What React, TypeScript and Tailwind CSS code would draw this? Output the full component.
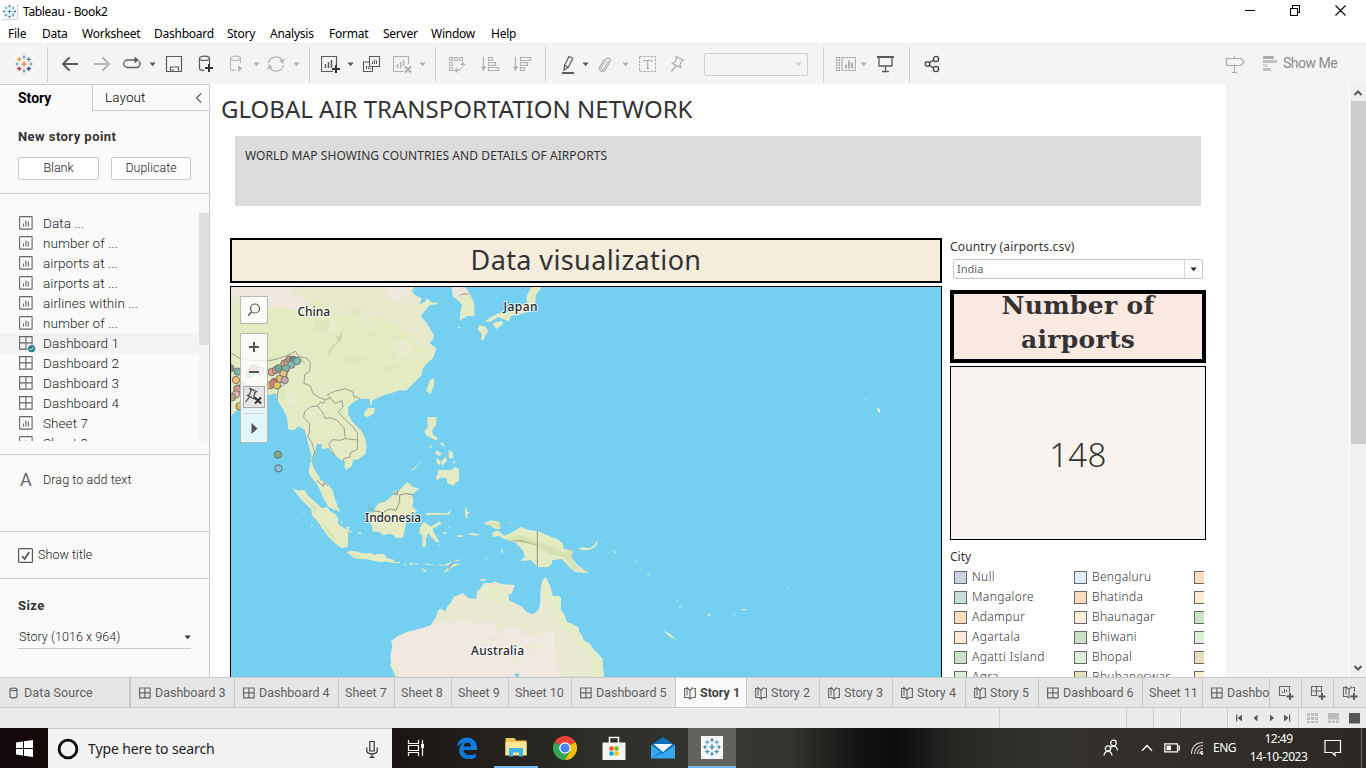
import React from "react";

const Svg = ({ w = 20, h = 20, className = "", children }: { w?: number; h?: number; className?: string; children: React.ReactNode }) => (
  <svg width={w} height={h} viewBox={`0 0 ${w} ${h}`} fill="none" className={`block shrink-0 ${className}`}>
    {children}
  </svg>
);

const Caret = ({ className = "" }: { className?: string }) => (
  <Svg w={7} h={5} className={className}>
    <path d="M.5.6h6.200L3.600 4.300z" fill="currentColor" />
  </Svg>
);

const Sep = ({ className = "" }: { className?: string }) => <div className={`h-[35px] w-px shrink-0 bg-[#cfcfcf] ${className}`} />;

const crosses: [number, number, number, number][] = [
  [10, 10, 2.8, 0],
  [10, 3, 1.7, 1],
  [10, 17, 1.7, 1],
  [3, 10, 1.7, 2],
  [17, 10, 1.7, 2],
  [5.3, 5.3, 2.2, 3],
  [14.7, 5.3, 2.2, 4],
  [5.3, 14.7, 2.2, 5],
  [14.7, 14.7, 2.2, 6],
];

const Logo = ({ colors, className = "", size = 20 }: { colors: string[]; className?: string; size?: number }) => (
  <svg width={size} height={size} viewBox="0 0 20 20" className={`block shrink-0 ${className}`}>
    {crosses.map(([x, y, r, c]) => (
      <path key={`${x}-${y}`} d={`M${x - r} ${y}H${x + r}M${x} ${y - r}V${y + r}`} stroke={colors[c]} strokeWidth="1.2" />
    ))}
  </svg>
);

const logoColors = ["#e8762d", "#7199a6", "#7199a6", "#eb912c", "#5b879b", "#c72035", "#1f457e"];
const logoBlue = ["#2f79ad", "#2f79ad", "#2f79ad", "#6aa5c9", "#6aa5c9", "#4a8fbd", "#4a8fbd"];

const menus: [string, string][] = [
  ["File", "w-[34px]"],
  ["Data", "w-[40px]"],
  ["Worksheet", "w-[72px]"],
  ["Dashboard", "w-[73px]"],
  ["Story", "w-[43px]"],
  ["Analysis", "w-[59px]"],
  ["Format", "w-[54px]"],
  ["Server", "w-[48px]"],
  ["Window", "w-[60px]"],
  ["Help", "w-[40px]"],
];

const TitleBar = () => (
  <header className="font-['Noto_Sans',sans-serif] text-xs text-black">
    <div className="flex h-6 items-center pl-[2px]">
      <Logo size={16} colors={logoBlue} className="border-r border-b border-gray-300" />
      <span className="ml-[5px] tracking-[-0.33px]">Tableau - Book2</span>
      <Svg w={110} h={16} className="mr-3 mb-1 ml-auto">
        <path d="M1 8.500h10M46.500 6.500h7v7h-7zM48.500 6.500v-3h7v7h-2M91.500 3.500l10 10M101.500 3.500l-10 10" stroke="#000" strokeWidth="1.1" />
      </Svg>
    </div>
    <nav className="flex h-[19px] items-center pl-2">
      {menus.map(([label, w]) => (
        <span key={label} className={`${w} shrink-0 tracking-[-0.25px] whitespace-nowrap`}>
          {label}
        </span>
      ))}
    </nav>
  </header>
);

const Toolbar = () => (
  <div className="flex h-[41px] items-center border-t border-[#ededed] bg-[#f4f4f4] text-[#5b5b5b]">
    <Logo colors={logoColors} className="ml-[14px]" />
    <Sep className="ml-[13px]" />
    <Svg className="ml-3"><path d="M18 10H3M9.500 3.500L3 10l6.500 6.500" stroke="currentColor" strokeWidth="2" /></Svg>
    <Svg className="ml-3 text-[#b4b4b4]"><path d="M2 10h15M10.500 3.500L17 10l-6.500 6.500" stroke="currentColor" strokeWidth="2" /></Svg>
    <Svg className="ml-[10px]">
      <path d="M9 6H5.500a3.700 3.700 0 0 0 0 7.500h9a3.700 3.700 0 0 0 2.500-6.300M8 6h7" stroke="currentColor" strokeWidth="1.3" />
      <path d="M12.500 2.700L17 6l-4.500 3.300z" fill="currentColor" />
    </Svg>
    <Caret className="ml-[7px]" />
    <Svg className="ml-2"><path d="M2.500 2.500h15v15h-15zM6.500 17v-4h8v4M9 17v-2" stroke="currentColor" strokeWidth="1.2" /></Svg>
    <Svg className="ml-3">
      <path d="M3.500 4.500v10c0 1.300 2 2 5 2M13.500 4.500V10" stroke="currentColor" strokeWidth="1.2" />
      <ellipse cx="8.500" cy="4.300" rx="5" ry="2.200" stroke="currentColor" strokeWidth="1.2" />
      <path d="M13 10v8M9 14h8" stroke="#333" strokeWidth="2" />
    </Svg>
    <Svg className="ml-[11px] text-[#b8b8b8]">
      <path d="M3.500 4.500v10c0 1.300 2 2 5 2M13.500 4.500V9" stroke="currentColor" strokeWidth="1.2" />
      <ellipse cx="8.500" cy="4.300" rx="5" ry="2.200" stroke="currentColor" strokeWidth="1.2" />
      <path d="M11 11l4.500 3.500-4.500 3.500z" fill="currentColor" />
    </Svg>
    <Caret className="ml-[6px] text-[#b0b0b0]" />
    <Svg className="ml-[6px] text-[#b4b4b4]">
      <path d="M2.500 9a7.500 7 0 0 1 14-2.500M17.500 11a7.500 7 0 0 1-14 2.500" stroke="currentColor" strokeWidth="1.3" />
      <path d="M18.800 5l-2 5-3.600-3.800zM1.200 15l2-5 3.600 3.800z" fill="currentColor" />
    </Svg>
    <Caret className="ml-[7px] text-[#b0b0b0]" />
    <Sep className="ml-[9px]" />
    <Svg className="ml-[11px]">
      <path d="M12 17.500H.5v-15h15V12" stroke="currentColor" strokeWidth="1.2" />
      <path d="M4.500 14V10M7.500 14V8M10.500 14V6" stroke="currentColor" strokeWidth="1.5" />
      <path d="M15 11v8M11 15h8" stroke="#333" strokeWidth="2" />
    </Svg>
    <Caret className="ml-[6px]" />
    <Svg className="ml-2">
      <path d="M7.500 2.500h10v10h-10zM7.500 8h-6v9.500h9V13M10.500 10V7.500M12.500 10V5.500M14.500 10V6.500M4.500 15v-3M6.500 15v-2M8.500 15v-1" stroke="currentColor" strokeWidth="1.1" />
    </Svg>
    <Svg className="ml-[11px] text-[#b0b0b0]">
      <path d="M11 17.500H.5v-15h15V10" stroke="currentColor" strokeWidth="1.2" />
      <path d="M4.500 14V10M7.500 14V8M10.500 12V6" stroke="currentColor" strokeWidth="1.500" />
      <path d="M12 12.500l6 6M18 12.500l-6 6" stroke="currentColor" strokeWidth="2" />
    </Svg>
    <Caret className="ml-[6px] text-[#b0b0b0]" />
    <Sep className="ml-[9px]" />
    <Svg className="ml-[11px] text-[#b4b4b4]">
      <path d="M2.500 3.500h3v3h-3zM7.500 3.500h3v3h-3zM12.500 3.500h3v3h-3zM2.500 8.500h3v3h-3zM2.500 13.500h3v3h-3z" stroke="currentColor" strokeWidth="1.1" />
      <path d="M16 10c0 4-3 6.500-7 6.500" stroke="currentColor" strokeWidth="1.2" />
      <path d="M13 11l3-3.500 2.500 3.500zM10.500 13.500L7 16.500l3.500 2.500z" fill="currentColor" />
    </Svg>
    <Svg className="ml-[13px] text-[#b0b0b0]">
      <path d="M3.500 3v11M8.500 3.500h4v3h-4zM8.500 8.500h7v3h-7zM8.500 13.500h10v3h-10z" stroke="currentColor" strokeWidth="1.200" />
      <path d="M.8 12.500h5.400L3.500 17z" fill="currentColor" />
    </Svg>
    <Svg className="ml-3 text-[#b0b0b0]">
      <path d="M3.500 3v11M8.500 3.500h10v3h-10zM8.500 8.500h7v3h-7zM8.500 13.500h4v3h-4z" stroke="currentColor" strokeWidth="1.200" />
      <path d="M.8 12.500h5.400L3.500 17z" fill="currentColor" />
    </Svg>
    <Sep className="ml-[13px]" />
    <Svg className="ml-3">
      <path d="M6.500 11.500l4.500-9 3.800 1.800-4.500 9zM6.500 11.500L6 16l4.300-2.700" stroke="currentColor" strokeWidth="1.2" />
      <path d="M4 19h12" stroke="currentColor" strokeWidth="2" />
    </Svg>
    <Caret className="ml-1" />
    <Svg className="ml-[6px] text-[#adadad]">
      <path d="M13.500 7l-4.800 8.300c-1 1.700-3.500.3-2.600-1.500l5-8.600c1.600-2.400 5.200-.4 4 2.200l-5 8.700c-1.700 3.200-7.200.600-5.400-3l4.300-7.600" stroke="currentColor" strokeWidth="1.1" />
    </Svg>
    <Caret className="ml-[7px] text-[#b0b0b0]" />
    <Svg className="ml-[9px] text-[#adadad]">
      <rect x="1.500" y="2.500" width="16" height="15" stroke="currentColor" strokeWidth="1.1" strokeDasharray="2.500 1.200" />
      <path d="M6 8V6.500h7.500V8M9.700 6.500v8M8 14.500h3.500" stroke="currentColor" strokeWidth="1.1" />
    </Svg>
    <Svg className="ml-[9px] text-[#adadad]">
      <path d="M9 2.500l7.500 3.500-2 1-1.500 4 .8 2.500-8.500-4 2.500-1.200L9.500 5zM9 12l-4.500 5.500" stroke="currentColor" strokeWidth="1.2" />
    </Svg>
    <div className="ml-[17px] flex h-[23px] w-[104px] shrink-0 items-center justify-end rounded-xs border border-[#d0d0d0] pr-[5px] text-[#cfcfcf]">
      <Caret />
    </div>
    <Sep className="ml-[15px]" />
    <Svg className="ml-3 text-[#b0b0b0]">
      <path d="M.5 3.500h3v3h-3zM.5 8.500h3v3h-3zM.5 13.500h3v3h-3zM6 3.500h13.500v13H6z" stroke="currentColor" strokeWidth="1.2" />
      <path d="M10 14.500v-4M13 14.500V6.500M16 14.500v-6" stroke="currentColor" strokeWidth="2" />
    </Svg>
    <Caret className="ml-1 text-[#b0b0b0]" />
    <Svg className="ml-[9px]">
      <path d="M1 3h17" stroke="currentColor" strokeWidth="2" />
      <path d="M3 3.500v8.500h13V3.500M9.500 12v5.500M6 17.500h7" stroke="currentColor" strokeWidth="1.3" />
    </Svg>
    <Sep className="ml-[13px]" />
    <Svg className="ml-3 text-[#444]">
      <path d="M7 9l4.500-3M7 11l4.500 3" stroke="currentColor" strokeWidth="1.300" />
      <circle cx="5.500" cy="10" r="2.300" stroke="currentColor" strokeWidth="1.300" />
      <circle cx="14" cy="5" r="2.600" stroke="currentColor" strokeWidth="1.300" />
      <circle cx="14" cy="15" r="2.600" stroke="currentColor" strokeWidth="1.300" />
    </Svg>
    <Svg className="ml-auto text-[#ababab]">
      <path d="M1.500 4.500h14.500l3 3.500-3 3.500H1.500zM9.500 2v2.500M9.500 11.500v7M7 18.500h5" stroke="currentColor" strokeWidth="1.200" />
    </Svg>
    <Svg className="ml-[17px]" w={18}>
      <path d="M1 2h11v3H1z" fill="#adadad" />
      <path d="M1 6h14v3H1zM1 14h8v3H1z" fill="#c0c0c0" />
      <path d="M1 10h5v3H1z" fill="#d5d5d5" />
    </Svg>
    <span className="mr-[28px] ml-[3px] w-[55px] pb-px font-['Roboto',sans-serif] text-[14px] tracking-[-0.5px] whitespace-nowrap text-[#8a8a8a]">Show Me</span>
  </div>
);

const SheetIcon = () => (
  <Svg w={14} h={14}>
    <rect x=".6" y=".6" width="12.500" height="12.500" rx=".6" stroke="#666" strokeWidth="1.1" />
    <path d="M4.500 10.500v-3M6.900 10.500v-6M9.300 10.500V5.500" stroke="#666" strokeWidth="1.1" />
  </Svg>
);

const GridIcon = ({ checked = false }: { checked?: boolean }) => (
  <svg width="17" height="14" viewBox="0 0 17 14" fill="none" className="block shrink-0 overflow-visible">
    <path d="M.6.6h12.500v12.500H.6zM6.900.6v12.500M.6 6.900h12.500" stroke="#666" strokeWidth="1.1" />
    {checked && (
      <>
        <circle cx="12.600" cy="12.700" r="4.200" fill="#fafafa" />
        <circle cx="12.600" cy="12.700" r="3.600" fill="#35809f" />
        <path d="M11 12.700l1.200 1.300 2.200-2.500" stroke="#fff" strokeWidth=".9" />
      </>
    )}
  </svg>
);

const StoryIcon = () => (
  <Svg w={12} h={14}>
    <path d="M2.500 2.500H.6v9h3.600L6 13l1.800-1.500h3.600v-9H9.500M6 13V4.500M6 4.500L3 1.500v8M6 4.500l3-3" stroke="#666" strokeWidth="1.100" />
  </Svg>
);

const points = ["Data ...", "number of ...", "airports at ...", "airports at ...", "airlines within ...", "number of ...", "Dashboard 1", "Dashboard 2", "Dashboard 3", "Dashboard 4", "Sheet 7", "Sheet 8"];

const Sidebar = () => (
  <aside className="flex w-[210px] shrink-0 flex-col border-t border-r border-[#c9c9c9] bg-[#fafafa] font-['Roboto',sans-serif] text-[13px] text-[#333]">
    <div className="flex h-[26px] shrink-0">
      <div className="flex w-[92px] items-center pl-[18px] text-sm font-bold text-black">Story</div>
      <div className="flex flex-1 items-center justify-between border-b border-l border-[#c9c9c9] pl-3 text-[13.500px] font-light tracking-[0.1px] text-black">
        Layout
        <Svg w={8} h={12} className="mr-[6px]"><path d="M6 1.500L1.500 6 6 10.500" stroke="#666" strokeWidth="1.300" /></Svg>
      </div>
    </div>
    <div className="h-[83px] shrink-0 border-b border-[#c9c9c9] px-[18px] pt-4">
      <h2 className="text-[13px] leading-5 font-bold tracking-[0.45px] text-[#333]">New story point</h2>
      <div className="mt-[10px] flex gap-3">
        <button className="h-[23px] w-[81px] rounded-xs border border-[#c9c9c9] bg-white text-[12.500px] font-light text-[#222]">Blank</button>
        <button className="h-[23px] w-[80px] rounded-xs border border-[#c9c9c9] bg-white text-[12.500px] font-light text-[#222]">Duplicate</button>
      </div>
    </div>
    <div className="h-[261px] shrink-0 border-b border-[#c9c9c9] pt-[19px]">
      <div className="flex h-[228px] overflow-hidden">
        <ul className="min-w-0 flex-1">
          {points.map((p, i) => (
            <li key={i} className={`flex h-5 items-center pl-[19px] text-[13.500px] ${i === 6 ? "bg-[#f3f3f3]" : ""}`}>
              <span className="w-6">{p.startsWith("Dash") ? <GridIcon checked={i === 6} /> : <SheetIcon />}</span>
              <span className="font-light tracking-[0.07px] text-[#222]">{p}</span>
            </li>
          ))}
        </ul>
        <div className="w-[10px] bg-[#f4f4f4]">
          <div className="h-[132px] bg-[#dfdfdf]" />
        </div>
      </div>
    </div>
    <div className="flex h-[77px] shrink-0 border-b border-[#c9c9c9] pt-[15px] pl-[20px]">
      <span className="w-[23px] text-[18px] leading-5 text-[#666]">A</span>
      <span className="text-[12.500px] leading-5 font-light tracking-[0.1px] text-[#222]">Drag to add text</span>
    </div>
    <div className="flex h-[47px] shrink-0 items-center border-b border-[#c9c9c9] pl-[18px]">
      <Svg w={15} h={15}>
        <rect x=".6" y=".6" width="13.800" height="13.800" rx="1" stroke="#555" strokeWidth="1.200" fill="#fff" />
        <path d="M4 8l2.700 3 4.500-7" stroke="#555" strokeWidth="1.800" />
      </Svg>
      <span className="ml-[5px] text-[12.500px] font-light tracking-[0.05px] text-[#222]">Show title</span>
    </div>
    <div className="px-[18px] pt-[17px]">
      <h2 className="text-[13px] leading-5 font-bold tracking-[0.4px] text-[#333]">Size</h2>
      <div className="mt-[10px] flex h-[23px] w-[173px] items-center justify-between border-b border-[#c9c9c9] pl-px">
        <span className="text-[12.500px] font-light tracking-[0.05px] text-[#222]">Story (1016 x 964)</span>
        <Caret />
      </div>
    </div>
  </aside>
);

const airports: [number, number, string][] = [
  [38, 275, "#5aa79d"], [33, 300, "#f0b455"], [37, 326, "#d3828c"], [33, 343, "#e8aaa5"], [21, 352, "#a89868"], [44, 379, "#d7b24f"], [16, 265, "#777"],
  [75, 280, "#a0cbe8"], [86, 266, "#d37295"], [106, 272, "#d4a6c8"], [54, 318, "#e9a0a0"], [72, 326, "#e9a0a0"],
  [140, 276, "#e88b78"], [153, 270, "#e88b78"], [160, 265, "#4f9b8f"], [178, 251, "#ce8d72"], [188, 246, "#f0a77b"], [193, 239, "#cf7173"],
  [205, 240, "#477a91"], [216, 243, "#6bb6ad"], [199, 254, "#6fb2b4"], [183, 265, "#6dada5"], [175, 281, "#eeb47a"], [164, 297, "#efbb5b"],
  [179, 300, "#c99bac"], [148, 306, "#e15759"], [135, 316, "#ed9661"], [146, 311, "#e86955"], [156, 316, "#efb83f"], [159, 524, "#86a65f"], [160, 565, "#93bcd2"],
];

const WorldMap = () => (
  <svg viewBox="231 287 710 390" className="block h-full w-full">
    <rect x="231" y="287" width="710" height="390" fill="#74cff1" />
    <g transform="translate(225 280) scale(.33333)" fill="#e4ebc3">
      <path d="M18 20H568L560 36L575 50L590 53L583 73L600 65L606 55L622 68L638 67L636 73L614 75L600 92L587 108L606 130L612 148L626 165L625 178L612 189L613 199L634 205L626 231L604 252L593 267L590 286L566 310L543 332L524 331L500 339L473 347L450 358L441 362L441 374L436 374L433 356L403 356L381 370L370 381L369 402L381 424L407 449L421 474L425 500L421 522L402 537L384 541L381 557L364 569L358 562L360 545L342 536L323 519L310 503L291 508L290 492L275 493L269 525L260 548L271 573L284 592L286 600L306 610L323 630L330 658L343 689L328 690L310 680L295 655L285 630L275 611L252 583V565L260 528L249 488L239 450L221 439L207 451L190 448L185 409L172 384L159 364L149 340L121 349L72 362L50 372L40 387L18 407Z" />
      <path d="M18 20H558L565 42L590 55L584 73L600 78L585 108L606 130L626 165L615 190L634 205L620 240L606 205L574 189L553 160L530 150L504 126L453 110L410 100L374 115L342 102L300 71L260 60L250 92L220 94L189 80L160 86L132 68L18 75Z" fill="#e8e8cd" />
      <path d="M18 20H208L190 38L230 52L251 72L235 94L210 86L187 88L164 76L120 80L87 44L18 46ZM480 20H555L560 52L535 48L518 65L490 55Z" fill="#efe8df" />
      <path d="M395 95L432 94L440 122L412 125ZM500 185L550 180L562 215L520 238ZM300 130L330 120L338 154L318 161ZM188 350L215 332L218 367L194 380Z" fill="#ebe9d3" opacity=".7" />
      <path d="M265 110L320 130L300 158L266 147ZM370 95L395 86L412 96L390 110ZM420 160L458 154L440 171ZM345 225L430 235L380 252ZM470 260L535 252L480 278ZM162 302L185 337L176 366L155 327ZM130 236L175 219L140 250ZM310 245L344 272L375 279L330 273Z" fill="#d9e3b6" opacity=".55" />
      <path d="M352 150L345 165L332 174L340 181L322 197L313 210L310 232L322 205L337 190L350 178ZM195 225L230 232L246 258L236 250L212 235Z" fill="#c4cda0" opacity=".75" />
      <path d="M680 20H720L735 42L748 70L748 109L727 108L704 122L707 90L711 76L698 59L685 51ZM920 20H951L933 45L931 68L915 94L882 104L858 108L851 124L820 111L797 125L779 125L797 111L823 99L857 96L878 82L907 69L904 50ZM803 130L829 122L835 131L813 148ZM764 136L781 139L790 154L780 169L776 181L768 180L770 162L757 148ZM615 299L628 294L627 315L617 342L604 333ZM418 397L430 383L451 385L446 401L429 411L417 407ZM607 411L635 411L633 435L621 449L624 464L638 474L637 482L620 475L603 466L598 453L608 443ZM612 495L620 498L618 508ZM632 510L649 520L643 528L632 522ZM642 486L655 490L661 503L648 493ZM671 510L683 516L686 535L672 535ZM634 533L646 542L645 556L636 552ZM647 546L661 531L667 540L652 558ZM557 573L592 541L568 568ZM633 590L650 578L667 582L690 560L702 568V602L690 610L684 617L668 608L666 595L648 592L638 600ZM699 141h6v3h-6zM684 540l7 7-5 6z" />
      <path d="M680 20H720L734 41L704 47L698 57L684 50Z" fill="#eee6dd" />
      <g fill="none" stroke="#979b8c" strokeWidth="2.800">
        <path d="M18 219L43 235L64 240L126 243L157 237L182 228L200 220L213 214L219 229L245 234L257 250L253 275L239 283L237 310L256 317L264 341L282 352L301 359L317 354L307 344L329 334L361 326L384 336L386 349L405 356M301 359L296 370L285 367L278 378L257 380L239 394L236 412L254 432L253 458L248 471L260 487L269 515L260 545M278 378L292 396L300 415L317 413L336 421L357 443L361 476L345 481L322 479L312 493L322 515L331 529M317 354L330 371L351 362L354 380L339 397L365 423L385 442L397 459L398 480L361 476M398 480L397 508L376 518L375 531L357 535L355 544M206 247L190 267L179 313L160 326L156 360M704 48L710 43L732 41M150 340L158 350" />
      </g>
      <g stroke="#555f5c" strokeWidth="3" opacity=".82">
        {airports.map(([x, y, c], i) => <circle key={i} cx={x} cy={y} r="11" fill={c} />)}
      </g>
    </g>
    <g transform="translate(225 470) scale(.33333)" fill="#e4ebc3">
      <path d="M203 55L218 61L239 61L248 76L274 99L290 115L308 112L316 124L329 131L340 145L339 161L351 170L366 179L369 188V222L367 231L350 235L328 218L308 198L292 176L277 153L262 138L258 117L237 97L217 75ZM365 247L377 242L398 245L411 250L441 250L447 256L458 251L477 252L486 265L507 269V279L487 275L463 276L427 268L390 266ZM429 130L444 127L452 112L461 99L480 95L504 75L521 64L546 35L563 50L584 57L570 66L562 78L566 93L562 110L577 124L560 134L546 150L540 174L535 203L514 204L505 196L493 191L475 196L462 186L443 184L440 165L428 152ZM602 130L626 128L666 130L681 119L672 134L646 134L604 136ZM584 173L593 160L600 156L617 170L643 154L650 160L622 178L637 206L645 216L634 216L619 202L609 188L603 208V230L592 230V195L584 193ZM720 114L724 112L726 125L736 125L727 134L727 149L721 137ZM641 0L702 0V27L690 30L686 46L668 40L664 25L648 20L633 30ZM780 158L797 151L823 155L827 176L809 176L796 166L777 163ZM800 189L818 181L838 197L869 183L888 170L907 179L937 184L979 201L1012 220L1016 236L1044 245L1035 257L1000 267L982 270L978 286L965 292L937 290L918 270L885 274L900 260L893 240L870 217L838 207L820 197L806 202ZM726 193L742 189L769 194L748 197ZM656 306L673 290L688 282L711 281L682 291L665 306ZM362 171L373 170L371 181L383 186L370 187ZM401 187h7v5h-7zM332 117l13 3-2 7zM258 160l6 8-4 3zM234 123l6 5-5 1zM507 276h18v3h-18zM538 281h4v6h-4zM550 281L568 277L562 286ZM570 279L582 282L570 285ZM600 280L632 285L604 284ZM645 285h13v2h-13zM660 283L681 275L668 288ZM588 293L597 298L607 303L597 306ZM640 283h8v3h-8zM675 275h4v4h-4zM683 277L705 266L702 272ZM698 196h16v5h-16zM655 187h10v4h-10zM778 268l7-7v6zM829 237l5 3v8h-5zM852 156h4v4h-4zM765 327h18l-1 5h-15zM671 170h4v4h-4zM640 220l5 6-4 3zM348 153h3v9h-3zM510 61l14 6-8 9-14-7z" />
      <path d="M495 583L501 596L519 620H1137L1136 610L1132 605V566L1120 553L1107 540L1094 520L1087 517L1076 511L1070 495L1062 485V473L1043 463L1025 457L1019 435L1008 420V385L1002 378L983 378L977 352L967 330L962 322L952 332L947 350L945 402L940 420L925 433L908 428L890 410L853 391L850 376L861 370L869 345L829 342L807 334L801 339H777L765 357L757 363L753 386L731 385L713 370L686 381L677 399L668 407L660 425L650 416L640 419L633 442L615 467L587 478L545 487L520 498L499 512L503 527L497 551L504 575Z" fill="#e9e9d2" />
      <path d="M499 512L520 498L545 487L615 467L650 457L695 459L724 450L734 461L784 465L773 455L823 473L812 484L829 490L805 498L783 513L804 512L840 490L831 482L845 467L875 472L894 497L916 490L945 497L940 480L960 487L990 488L985 520L997 550L994 580L1010 620H525L508 590L497 574L497 551L503 527ZM790 455L814 460L803 477Z" fill="#efe9e2" />
      <path d="M1132 566L1107 540L1090 519L1070 511L1062 485L1043 463L1025 457L1008 420V385L1002 378L983 378L962 322L950 345L950 360L960 375L975 385L980 420L1000 430L1012 470L1035 485L1050 520L1085 540L1100 575L1098 620H1137ZM770 362L784 347L826 349L855 371L838 375L840 390L811 390L799 392L784 385ZM495 583L512 620H524L509 588ZM855 575L882 560L867 581ZM924 523L942 521L932 535L942 550L922 540Z" fill="#e5ecc8" />
      <path d="M870 609L884 614L880 620H871Z" fill="#74cff1" />
      <path d="M229 76L273 113L271 129L257 104ZM290 160L320 190L332 212L302 179ZM374 249L417 265L396 267ZM782 159L824 161L826 175Z" fill="#d3dfae" />
      <path d="M506 70L518 64V75ZM275 31L295 49L297 38L309 47M430 109L443 122L475 127L493 117L513 121L524 95V75L541 71L567 74M670 297L679 284" fill="none" stroke="#8d9282" strokeWidth="3" />
    </g>
    <g transform="translate(470 480) scale(.33333)" fill="#e4ebc3">
      <path d="M202 153L244 171L263 178L277 190L281 206L309 215L300 227L322 254L356 280L314 276L293 256L275 237L247 240L243 256L230 262L202 260Z" />
      <path d="M103 178L140 164L175 172L215 190L252 198L278 216L310 211L303 234L311 246L330 269L314 274L280 231L230 220L205 200L160 185Z" fill="#d9e2b4" />
      <path d="M115 181L158 179L192 191L212 202L175 190L140 185Z" fill="#b9c38f" />
      <path d="M202 153V260" stroke="#8d9282" strokeWidth="3" />
      <path d="M322 205L337 202L359 205L377 193V184L383 186L379 198L360 210H337ZM350 263L359 268L351 267ZM392 178l4 4h-4zM428 208L440 218L434 220ZM457 224L465 230L461 229ZM472 245l4 3h-4zM492 241L504 247L499 248ZM505 265L517 269L512 271ZM522 257l5 2h-4zM533 282h4v4h-4zM617 357L624 363L622 367ZM627 378h7v3h-7zM579 450L604 464L617 479L603 472L592 464Z" />
    </g>
    <path d="M877 407l3 2v4l-2-1zM865 399h1v1h-1zM787 587h1v1h-1zM707 613l4 2-3 1zM742 609h4v1h-4zM733 614l3 1h-3z" fill="#e8eed0" />
    <g fontFamily="Noto Sans, sans-serif" fontSize="12" fontWeight="500" fill="#292929" stroke="#fff" strokeOpacity=".7" strokeWidth="2" strokeLinejoin="round" paintOrder="stroke">
      <text x="297.500" y="315.500" textLength="32.500">China</text>
      <text x="503.500" y="310.500" textLength="34">Japan</text>
      <text x="365" y="522" textLength="56">Indonesia</text>
      <text x="471" y="654.500" textLength="53">Australia</text>
    </g>
  </svg>
);

const MapControls = () => (
  <div className="absolute top-[9px] left-[9px] flex w-[28px] flex-col gap-[9px]">
    <div className="flex h-[28px] items-center justify-center border border-[#b5b8b3] bg-white/80">
      <Svg w={16} h={16}>
        <circle cx="9" cy="6.500" r="4.500" stroke="#555" strokeWidth="1.200" />
        <path d="M5.800 9.800L2.200 13.500" stroke="#555" strokeWidth="1.400" />
      </Svg>
    </div>
    <div className="flex h-[110px] flex-col items-center border border-[#b5b8b3] bg-white/80">
      <Svg w={26} h={26}><path d="M8 13h10M13 8v10" stroke="#555" strokeWidth="2" /></Svg>
      <Svg w={26} h={26}><path d="M8 12h10" stroke="#555" strokeWidth="2" /></Svg>
      <div className="flex h-[22px] w-[22px] items-center justify-center border border-[#aaa] bg-[#e5e5e5]">
        <Svg>
          <path d="M6 1.500l6.500 3-1.500 1-1 3.500 1 3-7.500-3.500 2-1 1.500-4zM5.500 10l-4 5" stroke="#444" strokeWidth="1.200" />
          <path d="M11 10.500l6 6M17 10.500l-6 6" stroke="#333" strokeWidth="2" />
        </Svg>
      </div>
      <div className="mt-[5px] h-px w-5 bg-[#d0d5d5]" />
      <Svg w={26} h={26}><path d="M10.500 9l6 5.500-6 5.500z" fill="#555" /></Svg>
    </div>
  </div>
);

const legend: [string, string, string, string, string][] = [
  ["Null", "bg-[#c9d3e2]", "Bengaluru", "bg-[#e1eef9]", "bg-[#fbdcbd]"],
  ["Mangalore", "bg-[#c8dfdc]", "Bhatinda", "bg-[#fbdcbd]", "bg-[#feebd9]"],
  ["Adampur", "bg-[#fbdcbd]", "Bhaunagar", "bg-[#feebd9]", "bg-[#cbe1c8]"],
  ["Agartala", "bg-[#feebd9]", "Bhiwani", "bg-[#cbe1c8]", "bg-[#dbf1d7]"],
  ["Agatti Island", "bg-[#cbe1c8]", "Bhopal", "bg-[#dbf1d7]", "bg-[#e8dfbc]"],
  ["Agra", "bg-[#dbf1d7]", "Bhubaneswar", "bg-[#e8dfbc]", "bg-[#fbefcf]"],
];

const Swatch = ({ c }: { c: string }) => <span className={`mr-[5px] h-[13px] w-[13px] shrink-0 border border-[#686868] ${c}`} />;

const Story = () => (
  <main className="flex min-w-0 flex-1 bg-[#f4f4f4] font-['Noto_Sans',sans-serif] text-[#333]">
    <section className="flex w-[1016px] shrink-0 flex-col overflow-hidden bg-white">
      <h1 className="h-[52px] shrink-0 pl-[11px] text-[24px] leading-[50px] font-normal whitespace-nowrap">GLOBAL AIR TRANSPORTATION NETWORK</h1>
      <div className="mr-[25px] ml-[25px] h-[70px] shrink-0 bg-[#dcdcdc] px-[10px] pt-[10px] text-xs leading-5 tracking-[0.08px]">WORLD MAP SHOWING COUNTRIES AND DETAILS OF AIRPORTS</div>
      <div className="mt-8 flex min-h-0 flex-1 gap-2 pl-5">
        <div className="flex w-[712px] shrink-0 flex-col gap-[3px]">
          <h2 className="h-[45px] shrink-0 border-2 border-black bg-[#f4eddb] text-center text-[27px] leading-[40px] tracking-[0.4px]">Data visualization</h2>
          <div className="relative min-h-0 flex-1 border-x border-t border-black">
            <WorldMap />
            <MapControls />
          </div>
        </div>
        <div className="flex w-[256px] shrink-0 flex-col">
          <div className="h-[21px] shrink-0 text-xs leading-[18px] tracking-[0.17px]">Country (airports.csv)</div>
          <div className="ml-[3px] flex h-5 w-[250px] shrink-0 rounded-xs border border-[#c5c5c5] bg-white text-[11px] text-[#666]">
            <span className="flex-1 pl-[3px] leading-[18px]">India</span>
            <span className="flex w-[18px] items-center justify-center border-l border-[#d5d5d5] text-[#222]"><Caret /></span>
          </div>
          <h2 className="mt-[11px] h-[73px] shrink-0 border-4 border-black bg-[#fae9e1] text-center font-['DejaVu_Serif',serif] text-[25px] leading-[34px] font-bold tracking-[0.3px]"><span className="-mt-[5px] block">Number of<br />airports</span></h2>
          <div className="mt-[3px] flex h-[174px] shrink-0 items-center justify-center border border-black bg-[#f8f3ef] pt-[3px] text-[33px] font-light tracking-[0.4px] text-[#333]">148</div>
          <div className="mt-[8px] h-[19px] shrink-0 text-xs leading-[18px]">City</div>
          <div className="ml-1 w-[250px] overflow-hidden text-xs font-light text-[#333]">
            {legend.map(([a, ca, b, cb, cc]) => (
              <div key={a} className="flex h-5 w-[260px] items-center whitespace-nowrap">
                <span className="flex w-[120px] items-center tracking-[0.37px]"><Swatch c={ca} />{a}</span>
                <span className="flex w-[120px] items-center tracking-[0.3px]"><Swatch c={cb} />{b}</span>
                <Swatch c={cc} />
              </div>
            ))}
          </div>
        </div>
      </div>
    </section>
    <div className="ml-auto flex w-[17px] flex-col items-center border-l border-white bg-[#f0f0f0]">
      <Svg w={16} h={17}><path d="M4.500 11L8 7.500l3.500 3.500" stroke="#555" strokeWidth="2" /></Svg>
      <div className="h-[343px] w-[15px] bg-[#cdcdcd]" />
      <Svg w={16} h={17} className="mt-auto"><path d="M4.500 6L8 9.500 11.500 6" stroke="#555" strokeWidth="2" /></Svg>
    </div>
  </main>
);

const tabs: [string, string, string][] = [
  ["grid", "Dashboard 3", "w-[104px]"],
  ["grid", "Dashboard 4", "w-[104px]"],
  ["", "Sheet 7", "w-[56px]"],
  ["", "Sheet 8", "w-[57px]"],
  ["", "Sheet 9", "w-[57px]"],
  ["", "Sheet 10", "w-[63px]"],
  ["grid", "Dashboard 5", "w-[104px]"],
  ["story", "Story 1", "w-[71px]"],
  ["story", "Story 2", "w-[73px]"],
  ["story", "Story 3", "w-[73px]"],
  ["story", "Story 4", "w-[73px]"],
  ["story", "Story 5", "w-[73px]"],
  ["grid", "Dashboard 6", "w-[104px]"],
  ["", "Sheet 11", "w-[60px]"],
  ["grid", "Dashbo", "w-[67px]"],
];

const TabGrid = () => <Svg w={12} h={12}><path d="M.6 1h10.500v9.800H.6zM5.900 1v9.800M.6 5.900h10.500" stroke="#666" strokeWidth="1.200" /></Svg>;

const Plus = () => <path d="M12 9v7M8.500 12.500h7" stroke="#555" strokeWidth="1.800" />;

const SheetTabs = () => (
  <div className="flex h-[31px] border-y border-[#c9c9c9] bg-[#e6e6e6] font-['Roboto',sans-serif] text-[12.500px] text-[#5f5f5f]">
    <div className="flex w-[131px] shrink-0 items-center border-r-2 border-[#c9c9c9] pl-[9px]">
      <Svg w={10} h={12}><path d="M1 2.500v7c0 1.900 7 1.900 7 0v-7c0-1.900-7-1.900-7 0c0 1.500 7 1.500 7 0" stroke="#666" strokeWidth="1.200" /></Svg>
      <span className="ml-[5px] pt-px tracking-[0.1px]">Data Source</span>
    </div>
    {tabs.map(([icon, label, w]) => (
      <div key={label} className={`flex shrink-0 items-center gap-[4px] overflow-hidden border-r border-[#c9c9c9] whitespace-nowrap ${w} ${icon ? "pl-[8px]" : "pl-[6px]"} ${label === "Story 1" ? "bg-[#fafafa] font-bold text-[#444]" : ""}`}>
        {icon === "grid" && <TabGrid />}
        {icon === "story" && <StoryIcon />}
        <span className="pt-px">{label}</span>
      </div>
    ))}
    <div className="flex w-8 items-center justify-center border-r border-[#c9c9c9]">
      <Svg w={16} h={17}><path d="M7.500 11.500h-6v-9h10v6M4.500 9V7.500M6.500 9V5M8.500 8V6" stroke="#666" strokeWidth="1.100" /><Plus /></Svg>
    </div>
    <div className="flex w-8 items-center justify-center border-r border-[#c9c9c9]">
      <Svg w={16} h={17}><path d="M7.500 11.500h-6v-9h10v6M6.500 2.500v9M1.500 7h10" stroke="#666" strokeWidth="1.100" /><Plus /></Svg>
    </div>
    <div className="flex flex-1 items-center justify-center">
      <Svg w={16} h={17}><path d="M3.500 3.500h-2v9h3.700L7 14M12.500 8V3.500h-2M7 14V5.500L4 2.500v8M7 5.500l3-3" stroke="#666" strokeWidth="1.100" /><Plus /></Svg>
    </div>
  </div>
);

const StatusBar = () => (
  <div className="flex h-5 bg-[#ebebeb] text-[#5a5a5a]">
    <div className="w-[1000px] border-r border-[#cdcdcd]" />
    <div className="w-[127px] border-r border-[#cdcdcd]" />
    <div className="w-[27px] border-r border-[#cdcdcd]" />
    <div className="w-[27px] border-r border-[#cdcdcd]" />
    <div className="w-[47px] border-r border-[#cdcdcd]" />
    <div className="flex w-[71px] items-center border-r border-[#cdcdcd] pl-[7px]">
      <Svg w={60} h={10}><path d="M1 1.500h1.200v7H1zM7 1.500v7L2.500 5zM22.500 1.500v7L18.500 5zM35 1.500v7L39 5zM49 1.500v7L53.500 5zM54 1.500h1.200v7H54z" fill="currentColor" /></Svg>
    </div>
    <div className="flex flex-1 items-center pl-[8px]">
      <Svg w={56} h={12}>
        <path d="M0 1h3v3H0zM4 1h3v3H4zM8 1h3v3H8zM0 5h3v3H0zM4 5h3v3H4zM8 5h3v3H8zM0 9h3v2H0zM4 9h3v2H4zM8 9h3v2H8zM21 1h11v6.500H21zM21 8.500h3V11h-3zM25 8.500h3V11h-3zM29 8.500h3V11h-3z" fill="#bcbcbc" />
        <path d="M42 1h11v10.500H42z" fill="#555" />
      </Svg>
    </div>
  </div>
);

const Taskbar = () => (
  <footer className="flex h-10 bg-[linear-gradient(90deg,#140709_0px,#1a1513_392px,#2e2d28_600px,#373730_740px,#33332f_790px,#131312_860px,#0c0c0c_895px,#272724_955px,#34322c_1050px,#2d2823_1366px)] font-['Noto_Sans',sans-serif] text-white">
    <div className="flex w-12 items-center justify-center">
      <Svg w={17} h={17}><path d="M0 2.500l7-1v6.500H0zM8 1.300L17 0v8H8zM0 9h7v6.500l-7-1zM8 9h9v8l-9-1.300z" fill="#fff" /></Svg>
    </div>
    <div className="flex w-[344px] items-center border-t border-[#c5c5c5] bg-[#f2f2f2] pl-[9px] text-[#333]">
      <Svg w={22} h={22}><circle cx="11" cy="11" r="8.900" stroke="#0a0a0a" strokeWidth="2.800" /></Svg>
      <span className="ml-[9px] text-[14px] tracking-[-0.12px] font-[380] text-[#222]">Type here to search</span>
      <Svg w={14} h={18} className="mr-[13px] ml-auto"><path d="M4.800 1.500h4.400v9.500H4.800zM1.800 7.500v3c0 4.500 10.400 4.500 10.400 0v-3M7 14v3M4.500 17.300h5" stroke="#333" strokeWidth="1.200" /></Svg>
    </div>
    <div className="flex w-12 items-center justify-center">
      <Svg w={18} h={18}><path d="M1.500 1v3.500h10V1M1.500 17v-3.500h10V17M1.500 6.500h10v5h-10zM15.500 1v16" stroke="#fff" strokeWidth="1.200" /><path d="M14 5h3v4h-3z" fill="#fff" /></Svg>
    </div>
    <div className="flex w-[54px] items-center justify-center">
      <Svg w={22} h={22}><path d="M1 10C1.500 4 6 .5 11 .5c6 0 10 4.500 10 10V13H7.500c.2 3.500 3 5 6.500 5 2.200 0 4-.6 5.800-1.600v4C18 21.400 15.500 22 13 22 7 22 3.200 18.500 3.200 13.500c0-3.200 1.600-6 4.600-7.500C4.800 6.500 2.500 8 1 10zM7.700 9.500H15c0-2.500-1.200-4-3.500-4C9.500 5.500 8 7 7.700 9.500z" fill="#0f7bdc" /></Svg>
    </div>
    <div className="flex w-11 items-center justify-center border-b-2 border-[#76b9ed]">
      <Svg w={24} h={22}><path d="M1.500 2h9l1.500 2.500h10.500V19h-21z" fill="#f4c64f" /><path d="M1.500 6h21v13.500h-21z" fill="#ffe797" /><path d="M5 20.500V12h14v8.500h-4v-4H9v4z" fill="#3db2ea" /></Svg>
    </div>
    <div className="flex w-[54px] items-center justify-center">
      <Svg w={24} h={24}>
        <path d="M12 12L1.600 6A12 12 0 0 1 22.400 6z" fill="#ea4335" />
        <path d="M12 12L1.600 6A12 12 0 0 0 12 24l5.500-9z" fill="#34a853" />
        <path d="M12 12L22.400 6A12 12 0 0 1 12 24l5.200-9z" fill="#fbbc05" />
        <circle cx="12" cy="12" r="5.800" fill="#fff" /><circle cx="12" cy="12" r="4.600" fill="#4285f4" />
      </Svg>
    </div>
    <div className="flex w-[43px] items-center justify-center">
      <Svg w={24} h={26}><path d="M7.500 8V2.500h9V8" stroke="#f5f5f5" strokeWidth="1.600" /><path d="M.5 7.500h23V25H.5z" fill="#f5f5f5" /><path d="M7.500 11.500h4v4h-4z" fill="#f25022" /><path d="M12.500 11.500h4v4h-4z" fill="#7fba00" /><path d="M7.500 16.500h4v4h-4z" fill="#00a4ef" /><path d="M12.500 16.500h4v4h-4z" fill="#ffb900" /></Svg>
    </div>
    <div className="flex w-[53px] items-center justify-center pl-[2px]">
      <Svg w={24} h={24}><path d="M0 9L12 1l12 8v13H0z" fill="#0f6dbd" /><path d="M2.500 8h19L12 16z" fill="#f3f8fc" /><path d="M0 9l12 8.500L24 9v13.500H0z" fill="#35a8ee" /><path d="M0 22.500L9.500 15l2.500 2.500z" fill="#1b8ad8" /></Svg>
    </div>
    <div className="flex w-12 items-center justify-center border-b-2 border-[#76b9ed] bg-[#62635e]">
      <div className="flex h-[23px] w-[22px] items-center justify-center bg-[#f5f7f9]"><Logo colors={logoBlue} /></div>
    </div>
    <div className="ml-auto flex items-center">
      <Svg w={16} h={18} className="mr-[22px]">
        <circle cx="10.500" cy="4" r="2.800" stroke="#fff" strokeWidth="1.200" /><path d="M7 10c1-4 7-4 7.500 1.500" stroke="#fff" strokeWidth="1.200" />
        <circle cx="5" cy="9.500" r="2.700" stroke="#fff" strokeWidth="1.200" /><path d="M1 16.500c.5-5.500 7.500-5.500 8 0" stroke="#fff" strokeWidth="1.200" />
      </Svg>
      <Svg w={12} h={8} className="mr-[11px]"><path d="M1 6.800L6 1.500l5 5.300" stroke="#fff" strokeWidth="1.300" /></Svg>
      <Svg w={16} h={10} className="mr-[10px]"><path d="M.8.8h12.700v8H.8zM14 3h1.300v4H14" stroke="#fff" strokeWidth="1.200" /><path d="M2.500 2.500H7v4.700H2.500z" fill="#fff" /></Svg>
      <Svg w={14} h={14} className="mr-[9px]"><path d="M1.500 13C1.500 6 6 1.500 13 1.500M4.500 13C4.500 8 8 4.500 13 4.500M7.500 13c0-3 2-5.500 5.500-5.500M10 13c0-1.500 1-2.700 3-2.700" stroke="#ddd" strokeWidth="1.100" /><circle cx="12" cy="12.500" r="1.200" fill="#fff" /></Svg>
      <span className="w-[34px] text-xs tracking-[-0.5px]">ENG</span>
      <div className="w-[63px] text-center text-xs leading-[18px] tracking-[-0.5px] whitespace-nowrap"><div>12:49</div><div>14-10-2023</div></div>
      <Svg w={18} h={18} className="mr-[19px] ml-[14px]"><path d="M1 1.500h15.500v12H11v3l-3-3H1z" stroke="#fff" strokeWidth="1.200" /></Svg>
      <div className="h-10 w-[5px] border-l border-[#6b6a66]" />
    </div>
  </footer>
);

export default function App() {
  return (
    <div className="flex h-[768px] w-[1366px] flex-col overflow-hidden bg-white">
      <TitleBar />
      <Toolbar />
      <div className="flex min-h-0 flex-1">
        <Sidebar />
        <Story />
      </div>
      <SheetTabs />
      <StatusBar />
      <Taskbar />
    </div>
  );
}
